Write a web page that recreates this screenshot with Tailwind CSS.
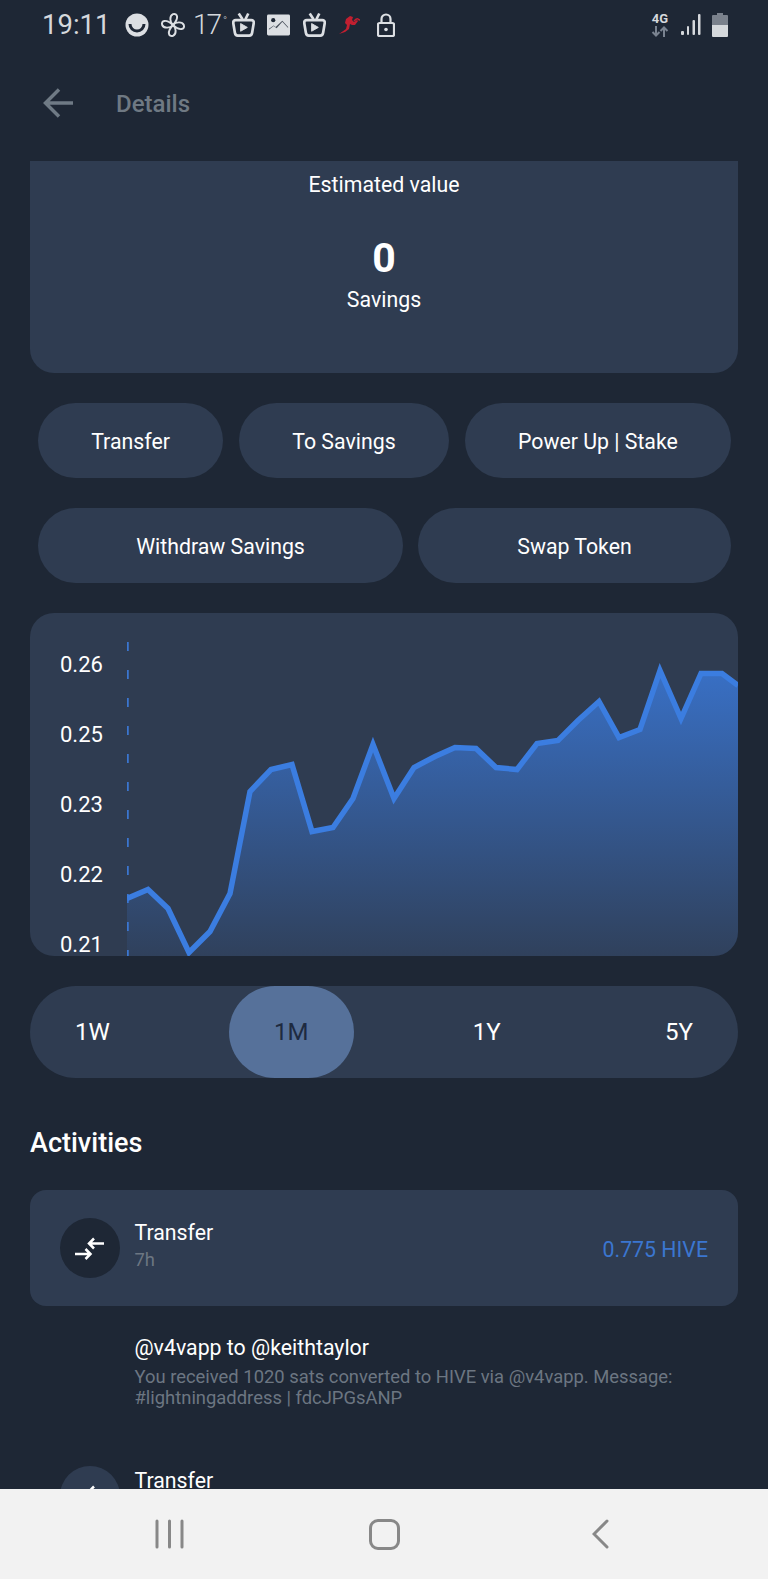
<!DOCTYPE html>
<html lang="en">
<head>
    <meta charset="UTF-8">
    <meta name="viewport" content="width=device-width, initial-scale=1.0">
    <title>Details</title>
    <script src="https://cdn.jsdelivr.net/npm/@tailwindcss/browser@4"></script>
</head>
<body class="font-['Roboto',sans-serif]">
    <div class="w-[768px] h-[1579px] flex flex-col overflow-hidden bg-[#1e2735] text-[21.3px] text-white">

        <!-- Status bar -->
        <div class="h-[50px] shrink-0 flex items-center justify-between pl-[42px] pr-[40px] text-[#d5d8dc]">
            <div class="flex items-center">
                <span class="text-[27.500px] w-[83px]">19:11</span>
                <svg class="w-[24px] h-[24px]" viewBox="0 0 24 24">
                    <circle cx="12" cy="12" r="11.500" fill="#dcdfe3"/>
                    <path d="M5 11a7 7 0 0 0 14 0" fill="none" stroke="#1e2735" stroke-width="3"/>
                </svg>
                <svg class="w-[26px] h-[26px] ml-[11px]" viewBox="0 0 24 24" fill="none" stroke="#dcdfe3" stroke-width="1.800" stroke-linejoin="round">
                    <path d="M12 12C9 9.500 8.500 3.500 12 2c4-1.300 6 3.500 0 10z"/>
                    <path d="M12 12C9 9.500 8.500 3.500 12 2c4-1.300 6 3.500 0 10z" transform="rotate(90 12 12)"/>
                    <path d="M12 12C9 9.500 8.500 3.500 12 2c4-1.300 6 3.500 0 10z" transform="rotate(180 12 12)"/>
                    <path d="M12 12C9 9.500 8.500 3.500 12 2c4-1.300 6 3.500 0 10z" transform="rotate(270 12 12)"/>
                </svg>
                <span class="text-[28px] font-light tracking-[-2px] ml-[7px] w-[39px] leading-none">17<sup class="text-[11px] -top-[10px] ml-[3px]">°</sup></span>
                <svg class="w-[23px] h-[26px]" viewBox="0 0 24 26" fill="none" stroke="#dcdfe3" stroke-width="2.800">
                    <path d="M7 1l4 6M17 1l-3 6"/>
                    <path d="M4 8h16q3 0 2.700 3L21 21q-.5 3-3 3H6q-2.500 0-3-3L1.300 11Q1 8 4 8z"/>
                    <path d="M9 11.500l7 4-7 4z" fill="#dcdfe3" stroke="#dcdfe3" stroke-width="1"/>
                </svg>
                <svg class="w-[23px] h-[22px] ml-[12px]" viewBox="0 0 24 22">
                    <rect width="24" height="22" rx="1.500" fill="#dcdfe3"/>
                    <circle cx="6.500" cy="6" r="2.200" fill="#1e2735"/>
                    <path d="M2 16l5-4 3 2.500 6-7 6 6.500V13l-6-6.500-7 6.500-2-1.500-5 3.500z" fill="#1e2735" opacity=".8"/>
                </svg>
                <svg class="w-[23px] h-[26px] ml-[13px]" viewBox="0 0 24 26" fill="none" stroke="#dcdfe3" stroke-width="2.800">
                    <path d="M7 1l4 6M17 1l-3 6"/>
                    <path d="M4 8h16q3 0 2.700 3L21 21q-.5 3-3 3H6q-2.500 0-3-3L1.300 11Q1 8 4 8z"/>
                    <path d="M9 11.500l7 4-7 4z" fill="#dcdfe3" stroke="#dcdfe3" stroke-width="1"/>
                </svg>
                <svg class="w-[22px] h-[20px] ml-[13px]" viewBox="0 0 22 20">
                    <path d="M0 19l7-5 1-4-2-2 1-4 4-3 3 1-1 3 2 2 3-2 1 1-3 4-3 0-2-1-1 5-4 3z" fill="#c11f30"/>
                    <path d="M15 6q3-3 4-2t2 1" fill="none" stroke="#c11f30" stroke-width="1.500"/>
                </svg>
                <svg class="w-[18px] h-[24px] ml-[16px]" viewBox="0 0 18 24" fill="none" stroke="#dcdfe3" stroke-width="2.200">
                    <path d="M4.500 10V6a4.500 4.500 0 0 1 9 0v4"/>
                    <rect x="1" y="10" width="16" height="13" rx="1.500"/>
                    <circle cx="9" cy="16.500" r="1.800" fill="#dcdfe3" stroke="none"/>
                </svg>
            </div>
            <div class="flex items-center">
                <div class="flex flex-col items-center w-[18px]">
                    <span class="text-[13px] font-bold leading-[11px]">4G</span>
                    <svg class="w-[18px] h-[11px] mt-[2px]" viewBox="0 0 18 11" fill="none" stroke="#7a8390" stroke-width="2">
                        <path d="M5 0v9M1.500 6L5 9.500 8.500 6M13 11V2M9.500 5L13 1.500 16.500 5"/>
                    </svg>
                </div>
                <svg class="w-[22px] h-[22px] ml-[11px]" viewBox="0 0 22 22" fill="#d5d8dc">
                    <rect x="1" y="17" width="3" height="4" rx="1"/>
                    <rect x="7" y="12" width="2" height="9" rx="1"/>
                    <rect x="12.500" y="6" width="2.500" height="15" rx="1"/>
                    <rect x="18" y="0" width="2.500" height="21" rx="1"/>
                </svg>
                <svg class="w-[16px] h-[24px] ml-[10px]" viewBox="0 0 16 24">
                    <path d="M5 0h6v2h4q1 0 1 1v9H0V3q0-1 1-1h4z" fill="#7a818c"/>
                    <path d="M0 12h16v11q0 1-1 1H1q-1 0-1-1z" fill="#d5d8dc"/>
                </svg>
            </div>
        </div>

        <!-- Header -->
        <div class="h-[106px] mb-[5px] shrink-0 flex items-center pl-[43px]">
            <svg class="w-[31px] h-[30px]" viewBox="0 0 31 30" fill="none" stroke="#6f7a85" stroke-width="3.500">
                <path d="M30 15H3M16 1.500L2.500 15 16 28.500"/>
            </svg>
            <span class="ml-[42px] pt-[1px] text-[24px] font-medium text-[#6f7983]">Details</span>
        </div>

        <main class="flex-1 overflow-hidden">
            <!-- Estimated value -->
            <div class="mx-[30px] h-[212px] rounded-b-[24px] bg-[#2f3c51] flex flex-col items-center pt-[11px]">
                <span class="leading-[26px]">Estimated value</span>
                <span class="mt-[36px] text-[41px] font-bold leading-[48px]">0</span>
                <span class="mt-[5px] leading-[26px]">Savings</span>
            </div>

            <!-- Actions -->
            <div class="mt-[30px] pl-[38px] pr-[37px] flex gap-[16px]">
                <div class="flex-auto h-[75px] pt-[2px] rounded-full bg-[#2f3c51] flex items-center justify-center">Transfer</div>
                <div class="flex-auto h-[75px] pt-[2px] rounded-full bg-[#2f3c51] flex items-center justify-center">To Savings</div>
                <div class="flex-auto h-[75px] pt-[2px] rounded-full bg-[#2f3c51] flex items-center justify-center">Power Up | Stake</div>
            </div>
            <div class="mt-[30px] pl-[38px] pr-[37px] flex gap-[15px]">
                <div class="w-[365px] h-[75px] pt-[2px] rounded-full bg-[#2f3c51] flex items-center justify-center">Withdraw Savings</div>
                <div class="flex-1 h-[75px] pt-[2px] rounded-full bg-[#2f3c51] flex items-center justify-center">Swap Token</div>
            </div>

            <!-- Chart -->
            <div class="mt-[30px] mx-[30px] h-[343px] rounded-[24px] bg-[#2f3c51] overflow-hidden flex">
                <div class="w-[97px] shrink-0 pl-[30px] pt-[16px] text-[22px]">
                    <div class="h-[70px] flex items-center">0.26</div>
                    <div class="h-[70px] flex items-center">0.25</div>
                    <div class="h-[70px] flex items-center">0.23</div>
                    <div class="h-[70px] flex items-center">0.22</div>
                    <div class="h-[70px] flex items-center">0.21</div>
                </div>
                <svg class="w-[611px] h-[343px] shrink-0" viewBox="127 612.500 611 343">
                    <defs>
                        <linearGradient id="area" gradientUnits="userSpaceOnUse" x1="0" y1="673" x2="0" y2="956">
                            <stop offset="0" stop-color="#3a78d8" stop-opacity=".85"/>
                            <stop offset="1" stop-color="#3a78d8" stop-opacity=".08"/>
                        </linearGradient>
                    </defs>
                    <path d="M127.500 641.500V956" stroke="#3b76d0" stroke-width="2.500" stroke-dasharray="9 19" fill="none"/>
                    <path d="M127 898L148 889 168 908 189 952 210 931 230 893 250 791 271 769 292 764 312 831 333 827 353 798 373 744 394 798 414 767 435 756 455 747 476 748 496 767 517 769 537 743 558 740 578 720 599 701 619 737 640 729 660 670 681 718 701 673 722 673 738 685V956H127z" fill="url(#area)"/>
                    <path d="M127 898L148 889 168 908 189 952 210 931 230 893 250 791 271 769 292 764 312 831 333 827 353 798 373 744 394 798 414 767 435 756 455 747 476 748 496 767 517 769 537 743 558 740 578 720 599 701 619 737 640 729 660 670 681 718 701 673 722 673 738 685" fill="none" stroke="#3b7de0" stroke-width="5.500"/>
                </svg>
            </div>

            <!-- Range picker -->
            <div class="mt-[30px] mx-[30px] h-[92px] rounded-full bg-[#2f3c51] flex justify-between text-[24px]">
                <div class="px-[45px] flex items-center rounded-full">1W</div>
                <div class="px-[45px] flex items-center rounded-full bg-[#56719a] text-[#1e2a40]">1M</div>
                <div class="px-[45px] flex items-center rounded-full">1Y</div>
                <div class="px-[45px] flex items-center rounded-full">5Y</div>
            </div>

            <!-- Activities -->
            <h2 class="mt-[48px] mx-[30px] pt-[1px] text-[27px] font-medium leading-[32px]">Activities</h2>

            <div class="mt-[31px] mx-[30px] h-[116px] rounded-[16px] bg-[#2f3c51] flex items-center px-[30px]">
                <div class="w-[60px] h-[60px] shrink-0 rounded-full bg-[#1e2735]">
                    <svg class="w-[60px] h-[60px]" viewBox="0 0 60 60" fill="none" stroke="#fff" stroke-width="2.500">
                        <path d="M44 25.500H29M34 20.500L29 25.500 34 30.500"/>
                        <path d="M15 36H30M25.500 31L30.500 36 25.500 41"/>
                    </svg>
                </div>
                <div class="ml-[14.500px] -mt-[3px] flex-1">
                    <div class="leading-[26px]">Transfer</div>
                    <div class="mt-[1px] text-[18.400px] leading-[26px] text-[#6c7682]">7h</div>
                </div>
                <div class="pt-[3px] text-[#3b76d0]">0.775 HIVE</div>
            </div>

            <div class="mt-[29px] ml-[134.500px] mr-[60px]">
                <div class="leading-[26px]">@v4vapp to @keithtaylor</div>
                <div class="mt-[5px] text-[18.400px] leading-[21px] text-[#6c7682]">You received 1020 sats converted to HIVE via @v4vapp. Message: #lightningaddress | fdcJPGsANP</div>
            </div>

            <div class="mt-[30px] mx-[30px] flex items-start px-[30px]">
                <div class="mt-[28px] w-[60px] h-[60px] shrink-0 rounded-full bg-[#2f3c51]">
                    <svg class="w-[60px] h-[60px]" viewBox="0 0 60 60" fill="none" stroke="#fff" stroke-width="2.500">
                        <path d="M44 25.500H29M34 20.500L29 25.500 34 30.500"/>
                        <path d="M15 36H30M25.500 31L30.500 36 25.500 41"/>
                    </svg>
                </div>
                <div class="ml-[14.500px] mt-[30px] flex-1 leading-[26px]">Transfer</div>
                <div class="mt-[46px] text-[#3b76d0]">0.688 HIVE</div>
            </div>
        </main>

        <!-- Android navigation bar -->
        <div class="h-[90px] shrink-0 bg-[#f2f2f2] flex items-center pl-[155px]">
            <svg class="w-[29px] h-[30px]" viewBox="0 0 29 30" stroke="#888" stroke-width="3" stroke-linecap="round">
                <path d="M2 2v26M14.500 2v26M27 2v26"/>
            </svg>
            <div class="ml-[185px] w-[31px] h-[31px] rounded-[9px] border-[3.500px] border-[#888]"></div>
            <svg class="ml-[192px] w-[17px] h-[30px]" viewBox="0 0 17 30" fill="none" stroke="#888" stroke-width="3" stroke-linecap="round">
                <path d="M15 2L2 15l13 13"/>
            </svg>
        </div>
    </div>
</body>
</html>
